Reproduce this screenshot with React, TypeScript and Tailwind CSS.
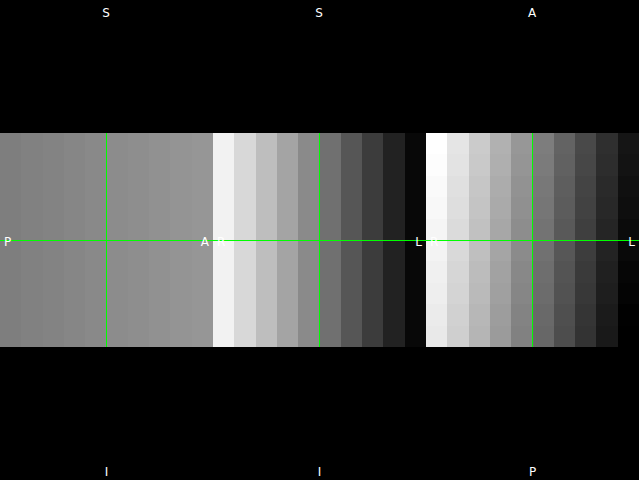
import React from "react";

type Panel = {
  top: string;
  bottom: string;
  left: string;
  right: string;
  kind: "sag" | "cor" | "ax";
};

const panels: Panel[] = [
  { top: "S", bottom: "I", left: "P", right: "A", kind: "sag" },
  { top: "S", bottom: "I", left: "R", right: "L", kind: "cor" },
  { top: "A", bottom: "P", left: "R", right: "L", kind: "ax" },
];

const gray = (v: number) => {
  const c = Math.max(0, Math.min(255, Math.round(v)));
  return `rgb(${c},${c},${c})`;
};

function Slice({ kind }: { kind: Panel["kind"] }) {
  const cols = Array.from({ length: 10 }, (_, i) => i);
  if (kind === "ax") {
    return (
      <div className="flex h-full w-full">
        {cols.map((c) => (
          <div key={c} className="flex flex-1 flex-col">
            {cols.map((r) => (
              <div
                key={r}
                className="flex-1"
                style={{ backgroundColor: gray(255 - 26 * c - 2.5 * r) }}
              />
            ))}
          </div>
        ))}
      </div>
    );
  }
  return (
    <div className="flex h-full w-full">
      {cols.map((c) => (
        <div
          key={c}
          className="flex-1"
          style={{
            backgroundColor:
              kind === "sag" ? gray(126 + 2.7 * c) : gray(242 - 26 * c),
          }}
        />
      ))}
    </div>
  );
}

const label = "text-white text-[12px] leading-none font-['DejaVu_Sans',sans-serif]";

function View({ p }: { p: Panel }) {
  return (
    <div className="flex h-[480px] w-[213px] flex-col bg-black">
      <div className="flex h-[133px] w-[213px] justify-center pt-[7px] pr-px">
        <span className={label}>{p.top}</span>
      </div>
      <div className="relative h-[214px] w-full">
        <Slice kind={p.kind} />
        <div className="absolute left-0 right-0 top-[107px] h-px bg-[#00ff00]" />
        <div className="absolute top-0 bottom-0 left-[106px] w-px bg-[#00ff00]" />
        <div className="absolute inset-x-0 top-[103px] flex justify-between px-[4px]">
          <span className={label}>{p.left}</span>
          <span className={label}>{p.right}</span>
        </div>
      </div>
      <div className="flex flex-1 w-[213px] justify-center pt-[119px]">
        <span className={label}>{p.bottom}</span>
      </div>
    </div>
  );
}

export default function App() {
  return (
    <div className="flex h-[480px] w-[639px] overflow-hidden bg-black">
      {panels.map((p, i) => (
        <View key={i} p={p} />
      ))}
    </div>
  );
}
